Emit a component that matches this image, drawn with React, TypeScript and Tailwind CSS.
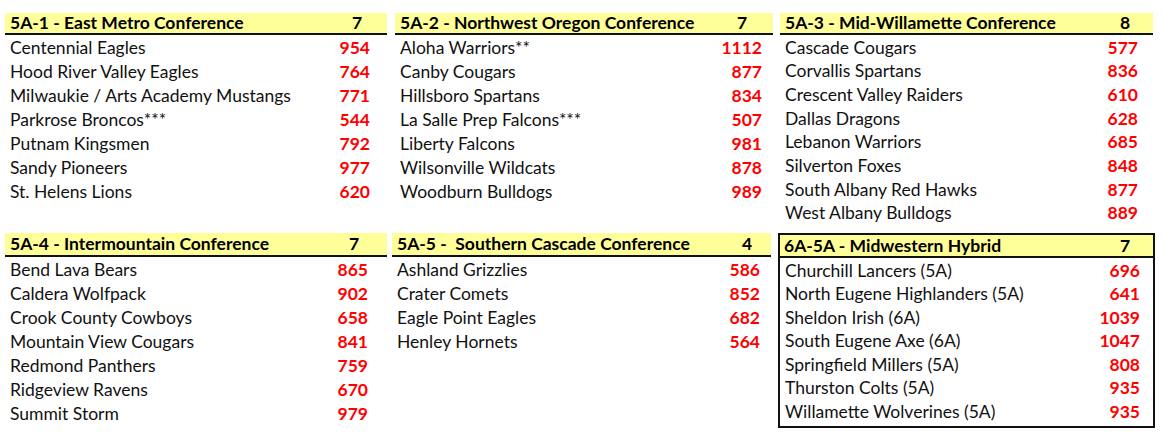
import React from "react";

type Team = [string, string];

type PanelProps = {
  title: string;
  count: string;
  teams: Team[];
  wrap: string;
  head: string;
  rowH: string;
  numPad: string;
  countPad: string;
};

function Panel({ title, count, teams, wrap, head, rowH, numPad, countPad }: PanelProps) {
  return (
    <div className={wrap}>
      <div className={head}>
        <div className="flex-1 font-bold text-[17.5px] leading-none whitespace-pre">{title}</div>
        <div className={countPad}>
          <div className="w-[30px] text-center font-bold text-[17.5px] leading-none">{count}</div>
        </div>
      </div>
      {teams.map(([n, v]) => (
        <div key={n} className={rowH}>
          <div className="flex-1 pl-[5px] text-[17.5px] leading-none text-[#111]">{n}</div>
          <div className={numPad}>
            <div className="text-right font-bold text-[17.5px] leading-none text-[#ff0000]">{v}</div>
          </div>
        </div>
      ))}
    </div>
  );
}

const topHead = "flex h-[22px] items-center bg-[#ffff99] border-b-2 border-[#111] pl-[5px]";
const botHead = "flex h-[24px] items-center bg-[#ffff99] border-b-2 border-[#111] pl-[5px]";

export default function App() {
  return (
    <div
      className="w-[1164px] h-[438px] bg-white text-black pt-[13px]"
      style={{ fontFamily: "Lato, 'Open Sans', sans-serif" }}
    >
      <div className="flex h-[212px] items-start">
        <Panel
          wrap="ml-[5px] w-[382px]"
          head={topHead}
          rowH="flex h-[24px] items-center pt-[2px]"
          numPad="pr-[17px]"
          countPad="pr-[15px]"
          title="5A-1 - East Metro Conference"
          count="7"
          teams={[
            ["Centennial Eagles", "954"],
            ["Hood River Valley Eagles", "764"],
            ["Milwaukie / Arts Academy Mustangs", "771"],
            ["Parkrose Broncos***", "544"],
            ["Putnam Kingsmen", "792"],
            ["Sandy Pioneers", "977"],
            ["St. Helens Lions", "620"],
          ]}
        />
        <Panel
          wrap="ml-[8px] w-[378px]"
          head={topHead}
          rowH="flex h-[24px] items-center pt-[2px]"
          numPad="pr-[11px]"
          countPad="pr-[16px]"
          title="5A-2 - Northwest Oregon Conference"
          count="7"
          teams={[
            ["Aloha Warriors**", "1112"],
            ["Canby Cougars", "877"],
            ["Hillsboro Spartans", "834"],
            ["La Salle Prep Falcons***", "507"],
            ["Liberty Falcons", "981"],
            ["Wilsonville Wildcats", "878"],
            ["Woodburn Bulldogs", "989"],
          ]}
        />
        <Panel
          wrap="ml-[7px] w-[373px]"
          head={topHead}
          rowH="flex h-[23.7px] items-center pt-[1px]"
          numPad="pr-[15px]"
          countPad="pr-[13px]"
          title="5A-3 - Mid-Willamette Conference"
          count="8"
          teams={[
            ["Cascade Cougars", "577"],
            ["Corvallis Spartans", "836"],
            ["Crescent Valley Raiders", "610"],
            ["Dallas Dragons", "628"],
            ["Lebanon Warriors", "685"],
            ["Silverton Foxes", "848"],
            ["South Albany Red Hawks", "877"],
            ["West Albany Bulldogs", "889"],
          ]}
        />
      </div>
      <div className="mt-[8px] flex items-start">
        <Panel
          wrap="ml-[5px] w-[382px]"
          head={botHead}
          rowH="flex h-[24px] items-center pt-[1px]"
          numPad="pr-[19px]"
          countPad="pr-[18px]"
          title="5A-4 - Intermountain Conference"
          count="7"
          teams={[
            ["Bend Lava Bears", "865"],
            ["Caldera Wolfpack", "902"],
            ["Crook County Cowboys", "658"],
            ["Mountain View Cougars", "841"],
            ["Redmond Panthers", "759"],
            ["Ridgeview Ravens", "670"],
            ["Summit Storm", "979"],
          ]}
        />
        <Panel
          wrap="ml-[5px] w-[379px]"
          head={botHead}
          rowH="flex h-[24px] items-center pt-[1px]"
          numPad="pr-[11px]"
          countPad="pr-[9px]"
          title="5A-5 -  Southern Cascade Conference"
          count="4"
          teams={[
            ["Ashland Grizzlies", "586"],
            ["Crater Comets", "852"],
            ["Eagle Point Eagles", "682"],
            ["Henley Hornets", "564"],
          ]}
        />
        <Panel
          wrap="ml-[7px] w-[377px] border-2 border-[#111] pb-[3px]"
          head="flex h-[23px] items-center bg-[#ffff99] border-b-2 border-[#111] pl-[4px]"
          rowH="flex h-[23.5px] items-center pt-[1px]"
          numPad="pr-[13px]"
          countPad="pr-[13px]"
          title="6A-5A - Midwestern Hybrid"
          count="7"
          teams={[
            ["Churchill Lancers (5A)", "696"],
            ["North Eugene Highlanders (5A)", "641"],
            ["Sheldon Irish (6A)", "1039"],
            ["South Eugene Axe (6A)", "1047"],
            ["Springfield Millers (5A)", "808"],
            ["Thurston Colts (5A)", "935"],
            ["Willamette Wolverines (5A)", "935"],
          ]}
        />
      </div>
    </div>
  );
}
